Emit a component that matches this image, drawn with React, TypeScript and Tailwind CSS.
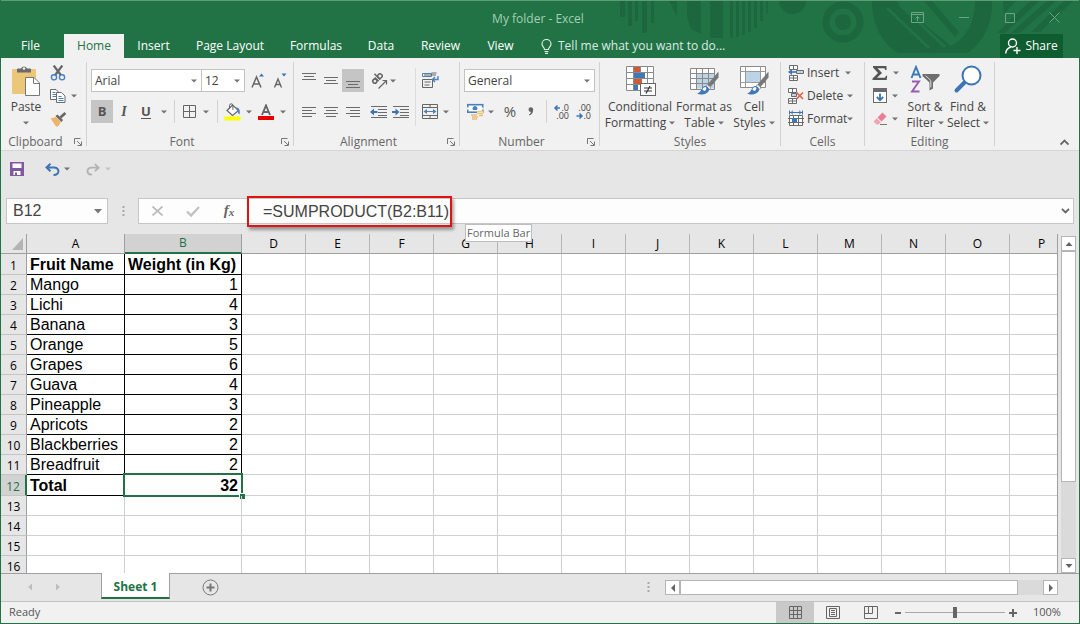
import React from "react";

type Kids = { children?: React.ReactNode };

/* ---------- small building blocks ---------- */

function Caret({ className = "text-[#737373]" }: { className?: string }) {
  return (
    <svg width="6" height="4" viewBox="0 0 6 4" className={className} aria-hidden="true">
      <path d="M0 0.5h6L3 3.5z" fill="currentColor" />
    </svg>
  );
}

function Tool({ label, className = "w-[22px]", children }: Kids & { label: string; className?: string }) {
  return (
    <button type="button" aria-label={label} className={`flex h-full shrink-0 items-center justify-center ${className}`}>
      {children}
    </button>
  );
}

function Sep() {
  return <div className="mt-px mb-1 w-px shrink-0 bg-[#d2d2d2]" />;
}

function Group({ title, launcher, className, children }: Kids & { title: string; launcher?: boolean; className: string }) {
  return (
    <section aria-label={title} className={`flex shrink-0 flex-col ${className}`}>
      <div className="flex h-[73px]">{children}</div>
      <div className="flex h-4 items-center">
        <h2 className="flex-1 text-center text-[12px] leading-4 text-[#666]">{title}</h2>
        {launcher && (
          <button type="button" aria-label={`${title} settings`} className="flex w-4 items-center justify-end pr-[3px]">
            <svg width="9" height="9" viewBox="0 0 9 9" fill="none" stroke="#777" aria-hidden="true">
              <path d="M0.5 6V0.5H6.5M3 3l4 4M7.5 3.5v4h-4" />
            </svg>
          </button>
        )}
      </div>
    </section>
  );
}

function Picker({ label, value, className }: { label: string; value: string; className: string }) {
  return (
    <label className={`relative h-full shrink-0 border border-[#c3c3c3] bg-white ${className}`}>
      <select
        aria-label={label}
        className="block h-[21px] w-full appearance-none bg-transparent pr-3 pl-[3px] text-[12px] leading-[18px] text-[#444] outline-none"
        defaultValue={value}
      >
        <option>{value}</option>
      </select>
      <span className="pointer-events-none absolute inset-y-0 right-1 flex items-center">
        <Caret />
      </span>
    </label>
  );
}

function BigButton({ icon, lines, className }: { icon: React.ReactNode; lines: [string, string]; className: string }) {
  return (
    <button type="button" className={`flex shrink-0 flex-col items-center pt-1 text-[12px] leading-4 whitespace-nowrap text-[#444] ${className}`}>
      <span className="flex h-[34px] items-start justify-center">{icon}</span>
      <span>{lines[0]}</span>
      <span className="flex items-center gap-[3px]">
        {lines[1]}
        <Caret />
      </span>
    </button>
  );
}

function CellsButton({ icon, text, gap }: { icon: React.ReactNode; text: string; gap: string }) {
  return (
    <button type="button" className={`flex h-[23px] items-center text-[12px] text-[#444] ${gap}`}>
      <span className="flex items-center gap-[3px]">
        {icon}
        {text}
      </span>
      <Caret />
    </button>
  );
}

/* ---------- icons ---------- */

function Lines({ rows }: { rows: [number, number, number][] }) {
  return (
    <svg width="16" height="16" viewBox="0 0 16 16" fill="#6b6b6b" aria-hidden="true">
      {rows.map(([x, y, w]) => (
        <rect key={y} x={x} y={y} width={w} height="1" />
      ))}
    </svg>
  );
}

const PasteIcon = (
  <svg width="30" height="32" viewBox="0 0 30 32" aria-hidden="true">
    <rect x="1" y="4" width="24" height="25" rx="1" fill="#ecc77a" />
    <path d="M6 7.500V4.500a1 1 0 0 1 1-1h3a3.200 3.200 0 0 1 6 0h3a1 1 0 0 1 1 1v3z" fill="#6b6b6b" />
    <circle cx="13" cy="3.500" r="1.300" fill="#f1f1f1" />
    <path d="M14.500 12.500h8.500l5.500 5.500v12.500h-14z" fill="#fff" stroke="#777" />
    <path d="M22.500 12.500v6h6" fill="none" stroke="#777" />
  </svg>
);

const CutIcon = (
  <svg width="16" height="16" viewBox="0 0 16 16" fill="none" aria-hidden="true">
    <path d="M3.700 0.500L10.800 10M12.300 0.500L5.200 10" stroke="#666" strokeWidth="2.200" />
    <circle cx="4" cy="12.300" r="2.600" fill="#f1f1f1" stroke="#4a80bd" strokeWidth="1.400" />
    <circle cx="12" cy="12.300" r="2.600" fill="#f1f1f1" stroke="#4a80bd" strokeWidth="1.400" />
  </svg>
);

const CopyIcon = (
  <svg width="16" height="16" viewBox="0 0 16 16" fill="#fff" stroke="#6b6b6b" aria-hidden="true">
    <path d="M0.500 1.500h5.500l3 3v7h-8.500z" />
    <path d="M2.500 4.500h3M2.500 6.500h4M2.500 8.500h4" stroke="#4a80bd" />
    <path d="M6.500 4.500h5l3.500 3.500v6.500H6.500z" />
    <path d="M8.500 8.500h3M8.500 10.500h5M8.500 12.500h5" stroke="#4a80bd" />
  </svg>
);

const PainterIcon = (
  <svg width="17" height="16" viewBox="0 0 17 16" aria-hidden="true">
    <path d="M0.500 7.500L6 6l5 5-3 4.500H6z" fill="#ecb56d" />
    <path d="M5.500 5l2-1.500L13 9l-1.500 2z" fill="#666" />
    <path d="M9.500 5.500l5-4.500 1.800 2-5 4.500z" fill="#666" />
  </svg>
);

function BordersIcon() {
  return (
    <svg width="13" height="13" viewBox="0 0 13 13" fill="none" stroke="#666" aria-hidden="true">
      <path d="M0.500 0.500h12v12h-12zM6.500 0.500v12M0.500 6.500h12" />
    </svg>
  );
}

const FillIcon = (
  <svg width="17" height="18" viewBox="0 0 17 18" aria-hidden="true">
    <path d="M3 7.500L8.500 2l6 5.500-6 5z" fill="#fff" stroke="#666" strokeWidth="1.200" />
    <path d="M5.500 6V2.500a1.700 1.700 0 0 1 3.400 0V7" fill="none" stroke="#666" />
    <path d="M12 4.500c3 0 4.500 2.500 3.500 7-1.500-1-2-2.500-2-4z" fill="#4a80bd" />
    <rect x="0.500" y="13.500" width="16" height="4" fill="#ffff00" />
  </svg>
);

const OrientIcon = (
  <svg width="18" height="18" viewBox="0 0 18 18" fill="none" stroke="#666" aria-hidden="true">
    <g transform="rotate(-45 7 7)" strokeWidth="1.500">
      <circle cx="4" cy="7" r="2.100" />
      <path d="M6.500 4.300V9.800M8.800 1.500v8.300" />
      <circle cx="11.200" cy="7" r="2.200" />
    </g>
    <path d="M8.500 16.500L16 9M12.500 8.500h4v4" strokeWidth="1.200" />
  </svg>
);

const WrapIcon = (
  <svg width="17" height="17" viewBox="0 0 17 17" fill="none" aria-hidden="true">
    <path d="M0.500 1.500h9v3h-9z" stroke="#4a80bd" />
    <path d="M2 3h12M9.500 1h5" stroke="#666" />
    <path d="M0.500 7.500h10v8h-10z" stroke="#666" />
    <path d="M2.500 10h6M2.500 13h5" stroke="#666" />
    <path d="M16 4v3.500H11M13 5l-2.500 2.500L13 10" stroke="#4a80bd" strokeWidth="1.400" />
  </svg>
);

const MergeIcon = (
  <svg width="16" height="15" viewBox="0 0 16 15" fill="none" stroke="#666" aria-hidden="true">
    <path d="M0.500 0.500h15v14h-15zM0.500 3.500h15M0.500 11.500h15M8 0.500v3M8 11.500v3" />
    <path d="M3 7.500h10" stroke="#4a80bd" />
    <path d="M1.500 7.500L5 5v5zM14.500 7.500L11 5v5z" fill="#4a80bd" stroke="none" />
  </svg>
);

function IndentIcon({ out }: { out?: boolean }) {
  return (
    <svg width="17" height="14" viewBox="0 0 17 14" aria-hidden="true">
      <path d="M1 1.500h16M8 4.500h9M8 7.500h9M8 10.500h9M1 12.500h16" stroke="#6b6b6b" fill="none" />
      {out ? (
        <path d="M0 7l4-3.500V6h3.500v2H4v2.500z" fill="#3c74b4" />
      ) : (
        <path d="M7.500 7L3.500 3.500V6H0v2h3.500v2.500z" fill="#3c74b4" />
      )}
    </svg>
  );
}

const MoneyIcon = (
  <svg width="17" height="17" viewBox="0 0 17 17" aria-hidden="true">
    <rect x="0.700" y="1.700" width="15" height="7.500" fill="#fff" stroke="#4a80bd" strokeWidth="1.600" />
    <path d="M6 7a2.500 2.500 0 1 1 4 0z" fill="#4a80bd" />
    <path d="M0 4.500h2v2H0zM14.500 4.500h2v2h-2z" fill="#fff" />
    <path d="M10 7.500h6v4h-6z" fill="#f4e3a6" />
    <path d="M10.500 8.500h5.500M10.500 10.500h5.500" stroke="#ecc77a" />
    <path d="M4 12h6M5 14h6M5 16h5M12 12.500h4" stroke="#ebba7c" strokeWidth="1.600" />
  </svg>
);

function DecimalIcon({ inc }: { inc?: boolean }) {
  return (
    <svg width="17" height="16" viewBox="0 0 17 16" aria-hidden="true">
      <g fill="#444" fontSize="9" fontFamily="Open Sans, sans-serif" textAnchor="end">
        <text x="16" y="7">{inc ? ".0" : ".00"}</text>
        <text x="16" y="15">{inc ? ".00" : ".0"}</text>
      </g>
      {inc ? (
        <path d="M7 4H2M4.500 1.500L2 4 4.500 6.500" fill="none" stroke="#3c74b4" strokeWidth="1.500" />
      ) : (
        <path d="M1.500 12h5.500M4.500 9.500L7 12 4.500 14.500" fill="none" stroke="#3c74b4" strokeWidth="1.500" />
      )}
    </svg>
  );
}

const ConditionalIcon = (
  <svg width="31" height="31" viewBox="0 0 31 31" aria-hidden="true">
    <path d="M1.500 1.500h27v24h-27z" fill="#fff" />
    <path d="M1.500 1.500h27v24h-27zM1.500 7.500h27M1.500 13.500h27M1.500 19.500h27M8.500 1.500v24M15.500 1.500v24M22.500 1.500v24" fill="none" stroke="#8a8a8a" />
    <path d="M9 2h6v5H9zM9 14h8v5H9z" fill="#cf5b35" />
    <path d="M9 8h11v5H9zM9 20h4v5H9z" fill="#3f78b6" />
    <rect x="15.500" y="18.500" width="15" height="12" fill="#fff" stroke="#666" />
    <path d="M19 23h8M19 26h8M25 21l-4 7.500" fill="none" stroke="#333" strokeWidth="1.200" />
  </svg>
);

function Brush() {
  return (
    <>
      <path d="M29.500 6.500v6L21.500 22l-3-2.500z" fill="#777" />
      <path d="M18 19.500l4 3.500-2 1.500-3-3z" fill="#fff" stroke="#777" strokeWidth="0.600" />
      <path d="M8 28.500c4.500-0.500 4-6 7.500-7.500 3 0 5 2 4.500 4.500C18.500 29 12 31 8 28.500z" fill="#3f78b6" />
      <path d="M13.500 25c0-2 1.500-3 3-3 1.500 0.500 1 2.500-0.500 4z" fill="#fff" />
    </>
  );
}

const TableIcon = (
  <svg width="30" height="31" viewBox="0 0 30 31" aria-hidden="true">
    <path d="M1.500 3.500h24v20h-24z" fill="#fff" />
    <path d="M7.500 8.500h18v15h-18z" fill="#bdd3e6" />
    <path d="M1.500 3.500h24v21h-24zM1.500 8.500h24M1.500 13.500h24M1.500 18.500h24M7.500 3.500v21M13.500 3.500v21M19.500 3.500v21" fill="none" stroke="#8a8a8a" />
    <Brush />
  </svg>
);

const CellStyleIcon = (
  <svg width="30" height="31" viewBox="0 0 30 31" aria-hidden="true">
    <path d="M1.500 1.500h25v21h-25z" fill="#fff" stroke="#8a8a8a" />
    <path d="M1.500 6.500h25M1.500 17.500h25M6.500 1.500v21M21.500 1.500v21" fill="none" stroke="#9a9a9a" />
    <path d="M7 7h14v10H7z" fill="#bdd3e6" />
    <Brush />
  </svg>
);

const InsertIcon = (
  <svg width="16" height="16" viewBox="0 0 16 16" fill="#fff" stroke="#6b6b6b" aria-hidden="true">
    <path d="M1.500 0.500h8v4h-8zM5.500 0.500v4M1.500 10.500h8v5h-8zM5.500 10.500v5M1.500 13h8" />
    <path d="M8.500 5.500h7v3h-7z" fill="#bdd3e6" />
    <path d="M8 7H3" stroke="#3c74b4" strokeWidth="1.600" />
    <path d="M0 7l4-3v6z" fill="#3c74b4" stroke="none" />
  </svg>
);

const DeleteIcon = (
  <svg width="16" height="16" viewBox="0 0 16 16" fill="#fff" stroke="#6b6b6b" aria-hidden="true">
    <path d="M0.500 0.500h8v4h-8zM4.500 0.500v4M0.500 10.500h8v5h-8zM4.500 10.500v5M0.500 13h8" />
    <path d="M3.500 5.500h5v3h-5z" fill="#bdd3e6" />
    <path d="M8.500 4.500l6.500 6.500M15 4.500L8.500 11" stroke="#e2604a" strokeWidth="1.700" />
  </svg>
);

const FormatIcon = (
  <svg width="16" height="17" viewBox="0 0 16 17" fill="none" stroke="#6b6b6b" aria-hidden="true">
    <path d="M1.500 5.500h13v10h-13z" fill="#fff" />
    <path d="M5.500 5.500v10M10.500 5.500v10M0 8.500h16M0 12.500h16" />
    <path d="M4 8h5v4H4z" fill="#3f78b6" stroke="none" />
    <path d="M2 2.500h12M1.500 0.500v4M14.500 0.500v4M5 0.700L3 2.500 5 4.300M11 0.700l2 1.800-2 1.800" stroke="#3c74b4" />
  </svg>
);

const SigmaIcon = (
  <svg width="16" height="16" viewBox="0 0 16 16" aria-hidden="true">
    <path d="M1 1h13.500v4h-1.300l-0.700-1.700H5.500L10 8l-5 4.700h8l1-2h1.200l-0.500 4.300H0.500v-1.500L6 8 1 2.500z" fill="#555" />
  </svg>
);

const FillDownIcon = (
  <svg width="15" height="16" viewBox="0 0 15 16" aria-hidden="true">
    <rect x="0.500" y="0.500" width="13" height="14" fill="#fff" stroke="#6b6b6b" />
    <path d="M0 0h14v4H0z" fill="#6b6b6b" />
    <path d="M7 5.500V12M3.800 9L7 12.200 10.200 9" fill="none" stroke="#3c74b4" strokeWidth="1.800" />
  </svg>
);

const EraserIcon = (
  <svg width="15" height="14" viewBox="0 0 15 14" aria-hidden="true">
    <path d="M4.500 5.500L9.500 0.500l4 4L8.500 9.500z" fill="#ec7f96" />
    <path d="M3.800 6.200L7.800 10.200 5.500 12.500H3.500L0.500 9.500z" fill="#f2a3b3" />
    <path d="M7 12.500h7" stroke="#777" />
  </svg>
);

const SortIcon = (
  <svg width="30" height="31" viewBox="0 0 30 31" fill="none" aria-hidden="true">
    <path d="M1.500 13L6 2l4.500 11M3 9.500h6" stroke="#3c78b8" strokeWidth="1.900" />
    <path d="M2 16.500h7L2 26.500h7.500" stroke="#9a5bb5" strokeWidth="1.900" />
    <path d="M12.500 9h17v2l-6.500 6.500v6l-3.500 2v-8l-7-6.500z" fill="#6d6d6d" />
    <path d="M15.500 10.500l5.300 5v7" stroke="#ddd" strokeWidth="1" />
  </svg>
);

const FindIcon = (
  <svg width="30" height="31" viewBox="0 0 30 31" fill="none" aria-hidden="true">
    <path d="M11.500 17.500L3.500 25.500" stroke="#3c74b4" strokeWidth="4" strokeLinecap="round" />
    <circle cx="18.500" cy="10.500" r="9" fill="#fff" stroke="#3c74b4" strokeWidth="2" />
  </svg>
);

/* ---------- header ---------- */

function HeaderArt() {
  return (
    <svg className="absolute top-0 right-0" width="479" height="58" viewBox="600 0 479 58" fill="#1c673e" aria-hidden="true">
      <path d="M620 1h5v16h-5zM628 1h4v25h-4zM635 1h3v20h-3zM642 1h5v32h-5zM651 1h3v22h-3z" />
      <path d="M669 1h8v15zM687 1h14v33l-10-5-4-12zM710 1h13v37h-13z" />
      <path d="M730 1h3v37h-3zM736 1h3v36h-3zM742 1h3v34h-3zM748 1h3v31h-3zM754 1h3v27h-3zM760 1h3v20h-3zM766 1h2v12h-2z" />
      <path d="M779 1h27a13.500 13 0 0 1-27 0z" />
      <circle cx="843" cy="22" r="17" fill="none" stroke="#1c673e" strokeWidth="7" />
      <circle cx="843" cy="22" r="8" />
      <path d="M872 1h24l55 45c12-6 24-20 24-45h17c1 24-10 42-24 52h-70C880 42 872 22 872 1z" />
      <path d="M887 8l42 40M899 4l46 43M912 1l35 35" fill="none" stroke="#217346" strokeWidth="3" />
      <path d="M923 1l32 36c8-8 14-18 14-36z" fill="#217346" />
      <path d="M924 1l8 0 27 31-4 5z" />
      <path d="M1003 1h13l-12 13zM1030 1h9l-34 32h-8zM1047 1h9l-36 32h-9zM1064 1h9l-33 31h-9z" />
    </svg>
  );
}

const tabs: [string, string][] = [
  ["Insert", "w-[59px]"],
  ["Page Layout", "w-[94px]"],
  ["Formulas", "w-[78px]"],
  ["Data", "w-[52px]"],
  ["Review", "w-[67px]"],
  ["View", "w-[53px]"],
];

function Header() {
  return (
    <header className="relative h-[58px] bg-[#217346] text-[12px] text-white">
      <HeaderArt />
      <div className="relative flex h-[34px] items-center border-t border-[#5f9a79]">
        <div className="w-[178px]" />
        <h1 className="flex-1 pt-0.5 text-center text-[12px] text-[#a3cfb4]">My folder - Excel</h1>
        <div className="flex w-[182px] items-center text-[#6ba585]">
          <button type="button" aria-label="Ribbon display options" className="flex w-10 justify-center">
            <svg width="13" height="11" viewBox="0 0 13 11" fill="none" stroke="currentColor" aria-hidden="true">
              <path d="M0.500 0.500h12v10h-12zM0.500 2.500h12M6.500 9V4.500M4.500 6.500l2-2 2 2" />
            </svg>
          </button>
          <button type="button" aria-label="Minimize" className="flex w-[54px] justify-center">
            <svg width="10" height="1" viewBox="0 0 10 1" aria-hidden="true"><rect width="10" height="1" fill="currentColor" /></svg>
          </button>
          <button type="button" aria-label="Maximize" className="flex w-[38px] justify-center">
            <svg width="10" height="10" viewBox="0 0 10 10" fill="none" stroke="currentColor" aria-hidden="true"><path d="M0.500 0.500h9v9h-9z" /></svg>
          </button>
          <button type="button" aria-label="Close" className="flex w-[50px] justify-center">
            <svg width="11" height="11" viewBox="0 0 11 11" fill="none" stroke="currentColor" aria-hidden="true"><path d="M0.500 0.500l10 10M10.500 0.500l-10 10" /></svg>
          </button>
        </div>
      </div>
      <nav className="relative flex h-6 items-stretch">
        <button type="button" className="w-[59px]">File</button>
        <button type="button" className="ml-1 w-[60px] bg-[#f1f1f1] text-[#217346]">Home</button>
        {tabs.map(([name, width]) => (
          <button type="button" key={name} className={width}>{name}</button>
        ))}
        <button type="button" className="ml-[14px] flex items-center gap-1.5 text-[#dcebe2]">
          <svg width="11" height="15" viewBox="0 0 11 15" fill="none" stroke="currentColor" strokeWidth="1.200" aria-hidden="true">
            <path d="M3.500 10.500c0-2-2.500-2.800-2.500-5.500a4.500 4.500 0 0 1 9 0c0 2.700-2.500 3.500-2.500 5.500zM3.500 12.500h4M4 14.400h3" />
          </svg>
          Tell me what you want to do...
        </button>
        <button type="button" className="mr-4 ml-auto flex w-[63px] items-center justify-center gap-1 bg-[#0e5c2f]">
          <svg width="16" height="16" viewBox="0 0 16 16" fill="none" stroke="#fff" strokeWidth="1.400" aria-hidden="true">
            <circle cx="7.500" cy="5" r="4" />
            <path d="M0.800 15.500c0-3.500 2-5.500 5-6.500M8.500 12.500h7M12 9v7" />
          </svg>
          Share
        </button>
      </nav>
    </header>
  );
}

/* ---------- ribbon ---------- */

function Ribbon() {
  return (
    <div className="flex h-[93px] border-b border-[#d5d5d5] bg-[#f1f1f1] pt-[3px]">
      <Group title="Clipboard" launcher className="w-[85px]">
        <button type="button" className="ml-1.5 flex w-[38px] flex-col items-center pt-1 text-[12px] leading-4 text-[#444]">
          <span className="flex h-[34px]">{PasteIcon}</span>
          Paste
          <span className="pt-1.5"><Caret className="block text-[#737373]" /></span>
        </button>
        <div className="ml-0.5 flex flex-col">
          <div className="flex h-[23px]"><Tool label="Cut">{CutIcon}</Tool></div>
          <div className="flex h-[23px]">
            <Tool label="Copy">{CopyIcon}</Tool>
            <Tool label="Copy options" className="w-[10px]"><Caret /></Tool>
          </div>
          <div className="flex h-[23px]"><Tool label="Format painter">{PainterIcon}</Tool></div>
        </div>
      </Group>
      <Sep />

      <Group title="Font" launcher className="w-[206px]">
        <div className="flex flex-col gap-2 pt-2 pl-1">
          <div className="flex h-[23px]">
            <Picker label="Font" value="Arial" className="w-[111px]" />
            <Picker label="Font size" value="12" className="ml-[-1px] w-[44px]" />
            <Tool label="Grow font" className="ml-px w-6">
              <svg width="16" height="16" viewBox="0 0 16 16" fill="none" aria-hidden="true">
                <path d="M2 14.500L6.500 4 11 14.500M3.500 11h6" stroke="#666" strokeWidth="1.500" />
                <path d="M9 3.500h5L11.500 0.500z" fill="#3c74b4" />
              </svg>
            </Tool>
            <Tool label="Shrink font" className="w-[22px]">
              <svg width="16" height="16" viewBox="0 0 16 16" fill="none" aria-hidden="true">
                <path d="M1.500 14.500L5 6l3.500 8.500M2.700 11.500h4.600" stroke="#666" strokeWidth="1.400" />
                <path d="M8.500 0.500h5L11 3.500z" fill="#3c74b4" />
              </svg>
            </Tool>
          </div>
          <div className="flex h-[23px]">
            <Tool label="Bold" className="w-[22px] bg-[#c5c5c5]"><b className="text-[13px] text-[#555]">B</b></Tool>
            <Tool label="Italic"><i className="font-[Liberation_Serif,serif] text-[14px] font-bold text-[#555]">I</i></Tool>
            <Tool label="Underline"><span className="border-b border-[#555] text-[13px] leading-[14px] font-bold text-[#555]">U</span></Tool>
            <Tool label="Underline options" className="w-[13px]"><Caret /></Tool>
            <div className="ml-1 w-px bg-[#d2d2d2]" />
            <Tool label="Borders" className="ml-[3px] w-[22px]"><BordersIcon /></Tool>
            <Tool label="Border options" className="w-3"><Caret /></Tool>
            <div className="ml-[5px] w-px bg-[#d2d2d2]" />
            <Tool label="Fill color" className="ml-[3px] w-[22px]">{FillIcon}</Tool>
            <Tool label="Fill options" className="w-[11px]"><Caret /></Tool>
            <Tool label="Font color" className="w-6">
              <svg width="16" height="16" viewBox="0 0 16 16" fill="none" aria-hidden="true">
                <path d="M4 11L8 1.500 12 11M5.300 8h5.400" stroke="#666" strokeWidth="1.900" />
                <rect y="12" width="16" height="4" fill="#e60000" />
              </svg>
            </Tool>
            <Tool label="Font color options" className="w-[10px]"><Caret /></Tool>
          </div>
        </div>
      </Group>
      <Sep />

      <Group title="Alignment" launcher className="w-[165px]">
        <div className="flex flex-col gap-2 pt-2 pl-1">
          <div className="flex h-[23px]">
            <Tool label="Top align"><Lines rows={[[1, 0, 14], [3, 3, 10], [1, 6, 14]]} /></Tool>
            <Tool label="Middle align"><Lines rows={[[1, 4, 14], [3, 7, 10], [1, 10, 14]]} /></Tool>
            <Tool label="Bottom align" className="w-[22px] bg-[#c5c5c5]"><Lines rows={[[1, 8, 14], [3, 11, 10], [1, 14, 14]]} /></Tool>
            <Tool label="Orientation" className="ml-1 w-[22px]">{OrientIcon}</Tool>
            <Tool label="Orientation options" className="w-1.5"><Caret /></Tool>
          </div>
          <div className="flex h-[23px]">
            <Tool label="Align left"><Lines rows={[[1, 3, 14], [1, 6, 10], [1, 9, 14], [1, 12, 10]]} /></Tool>
            <Tool label="Center"><Lines rows={[[1, 3, 14], [3, 6, 10], [1, 9, 14], [3, 12, 10]]} /></Tool>
            <Tool label="Align right"><Lines rows={[[1, 3, 14], [5, 6, 10], [1, 9, 14], [5, 12, 10]]} /></Tool>
            <Tool label="Decrease indent" className="ml-[3px] w-[22px]"><IndentIcon out /></Tool>
            <Tool label="Increase indent"><IndentIcon /></Tool>
          </div>
        </div>
        <div className="mt-[7px] mb-2 ml-1 w-px bg-[#dcdcdc]" />
        <div className="flex flex-col gap-2 pt-2 pl-[3px]">
          <div className="flex h-[23px]"><Tool label="Wrap text">{WrapIcon}</Tool></div>
          <div className="flex h-[23px]">
            <Tool label="Merge and center">{MergeIcon}</Tool>
            <Tool label="Merge options" className="w-[10px]"><Caret /></Tool>
          </div>
        </div>
      </Group>
      <Sep />

      <Group title="Number" launcher className="w-[139px]">
        <div className="flex flex-col gap-2 pt-2 pl-1">
          <div className="flex h-[23px]"><Picker label="Number format" value="General" className="w-[131px]" /></div>
          <div className="flex h-[23px]">
            <Tool label="Currency">{MoneyIcon}</Tool>
            <Tool label="Currency options" className="w-[10px]"><Caret /></Tool>
            <Tool label="Percent" className="w-7"><span className="text-[15px] text-[#555]">%</span></Tool>
            <Tool label="Comma style" className="w-3.5">
              <svg width="6" height="9" viewBox="0 0 6 9" aria-hidden="true"><path d="M0.500 2.500a2.300 2.300 0 0 1 4.700 0C5.200 5.500 4 7.500 1.500 8.500L1 7.500c1.200-0.700 1.700-1.500 1.800-2.600A2.300 2.300 0 0 1 0.500 2.500z" fill="#666" /></svg>
            </Tool>
            <div className="ml-2 w-px bg-[#d2d2d2]" />
            <Tool label="Increase decimal" className="ml-[3px] w-[22px]"><DecimalIcon inc /></Tool>
            <Tool label="Decrease decimal"><DecimalIcon /></Tool>
          </div>
        </div>
      </Group>
      <Sep />

      <Group title="Styles" className="w-[180px]">
        <BigButton icon={ConditionalIcon} lines={["Conditional", "Formatting"]} className="ml-[5px] w-[70px]" />
        <BigButton icon={TableIcon} lines={["Format as", "Table"]} className="w-[58px]" />
        <BigButton icon={CellStyleIcon} lines={["Cell", "Styles"]} className="w-[42px]" />
      </Group>
      <Sep />

      <Group title="Cells" className="w-[83px]">
        <div className="flex flex-col items-start pl-[7px]">
          <CellsButton icon={InsertIcon} text="Insert" gap="gap-1.5" />
          <CellsButton icon={DeleteIcon} text="Delete" gap="gap-1" />
          <CellsButton icon={FormatIcon} text="Format" gap="gap-0" />
        </div>
      </Group>
      <Sep />

      <Group title="Editing" className="w-[129px]">
        <div className="flex flex-col pl-1">
          <div className="flex h-[23px]"><Tool label="AutoSum">{SigmaIcon}</Tool><Tool label="AutoSum options" className="w-[10px]"><Caret /></Tool></div>
          <div className="flex h-[23px]"><Tool label="Fill">{FillDownIcon}</Tool><Tool label="Fill choices" className="w-[8px]"><Caret /></Tool></div>
          <div className="flex h-[23px]"><Tool label="Clear">{EraserIcon}</Tool><Tool label="Clear options" className="w-[8px]"><Caret /></Tool></div>
        </div>
        <BigButton icon={SortIcon} lines={["Sort &", "Filter"]} className="ml-0.5 w-[44px]" />
        <BigButton icon={FindIcon} lines={["Find &", "Select"]} className="w-[42px]" />
      </Group>
      <Sep />
      <button type="button" aria-label="Collapse ribbon" className="mt-auto mr-2.5 mb-1 ml-auto">
        <svg width="9" height="7" viewBox="0 0 9 7" fill="none" stroke="#666" strokeWidth="1.800" aria-hidden="true"><path d="M0.500 5.500l4-4 4 4" /></svg>
      </button>
    </div>
  );
}

/* ---------- quick access and formula bar ---------- */

function QuickAccess() {
  return (
    <div className="flex h-9 items-center pl-[9px]">
      <button type="button" aria-label="Save">
        <svg width="14" height="14" viewBox="0 0 14 14" aria-hidden="true">
          <path d="M0 0h14v14H0z" fill="#8159a3" />
          <path d="M2.500 1.500h9V6h-9zM3.500 9h7v4h-7z" fill="#fff" />
          <path d="M5 10.500h2V13H5z" fill="#8159a3" />
        </svg>
      </button>
      <button type="button" aria-label="Undo" className="ml-[21px]">
        <svg width="15" height="13" viewBox="0 0 15 13" fill="none" stroke="#3f73b5" strokeWidth="2" aria-hidden="true">
          <path d="M5.500 0.800L1.500 4.500l4 3.700M1.500 4.500h7.500c6 0 6 7.500-0.500 7.500" />
        </svg>
      </button>
      <button type="button" aria-label="Undo list" className="ml-1"><Caret /></button>
      <button type="button" aria-label="Redo" className="ml-4">
        <svg width="14" height="13" viewBox="0 0 15 13" fill="none" stroke="#b3b3b3" strokeWidth="2" aria-hidden="true">
          <path d="M9.500 0.800l4 3.700-4 3.700M13.500 4.500H6c-6 0-6 7.500 0.500 7.500" />
        </svg>
      </button>
      <button type="button" aria-label="Redo list" className="ml-[5px]"><Caret className="text-[#c4c4c4]" /></button>
    </div>
  );
}

function FormulaBar() {
  return (
    <div className="relative flex h-[47px] pt-[11px] pr-[5px] pl-[5px] font-[Liberation_Sans,sans-serif] text-[16px] text-[#444]">
      <div className="flex h-[26px] w-[102px] items-center border border-[#c6c6c6] bg-[#fdfdfd] pr-[5px] pl-1.5">
        <input aria-label="Name box" defaultValue="B12" className="min-w-0 flex-1 bg-transparent outline-none" />
        <svg width="8" height="5" viewBox="0 0 8 5" aria-hidden="true"><path d="M0 0h8L4 4.500z" fill="#777" /></svg>
      </div>
      <svg className="mt-2 ml-3.5" width="3" height="11" viewBox="0 0 3 11" fill="#a8a8a8" aria-hidden="true"><path d="M0.500 0h2v2h-2zM0.500 4h2v2h-2zM0.500 8h2v2h-2z" /></svg>
      <div className="ml-[13px] flex h-[26px] flex-1 items-stretch border border-[#c6c6c6] bg-[#fdfdfd]">
        <button type="button" aria-label="Cancel" className="flex w-9 items-center justify-center">
          <svg width="11" height="10" viewBox="0 0 11 10" fill="none" stroke="#b8b8b8" strokeWidth="1.600" aria-hidden="true"><path d="M0.500 0.500l10 9M10.500 0.500l-10 9" /></svg>
        </button>
        <button type="button" aria-label="Enter" className="flex w-9 items-center justify-center">
          <svg width="14" height="11" viewBox="0 0 14 11" fill="none" stroke="#c2c2c2" strokeWidth="2.400" aria-hidden="true"><path d="M1 5.500l4 4L13 1" /></svg>
        </button>
        <button type="button" aria-label="Insert function" className="flex w-9 items-center justify-center pb-0.5 font-[Liberation_Serif,serif] leading-none font-bold text-[#666] italic">
          <span className="text-[15px]">f</span>
          <span className="pt-1 text-[11px]">x</span>
        </button>
        <div className="mt-[-3px] mb-[-4px] flex w-[205px] border-2 border-[#e01212] pt-px pl-[14px] shadow-[2px_3px_3px_rgba(0,0,0,0.35)]">
          <input aria-label="Formula" defaultValue="=SUMPRODUCT(B2:B11)" className="w-full bg-transparent outline-none" />
        </div>
        <button type="button" aria-label="Expand formula bar" className="mr-[3px] ml-auto">
          <svg width="9" height="6" viewBox="0 0 9 6" fill="none" stroke="#666" strokeWidth="1.900" aria-hidden="true"><path d="M1 0.800l3.500 3.500L8 0.800" /></svg>
        </button>
      </div>
      <div role="tooltip" className="absolute top-[37px] left-[464px] z-10 border border-[#bdbdbd] bg-white px-px font-['Open_Sans',sans-serif] text-[11px] leading-4 text-[#666]">
        Formula Bar
      </div>
    </div>
  );
}

/* ---------- sheet ---------- */

const fruit: [string, string][] = [
  ["Fruit Name", "Weight (in Kg)"],
  ["Mango", "1"],
  ["Lichi", "4"],
  ["Banana", "3"],
  ["Orange", "5"],
  ["Grapes", "6"],
  ["Guava", "4"],
  ["Pineapple", "3"],
  ["Apricots", "2"],
  ["Blackberries", "2"],
  ["Breadfruit", "2"],
  ["Total", "32"],
];
const restColumns = ["D", "E", "F", "G", "H", "I", "J", "K", "L", "M", "N", "O", "P"];
const rowNumbers = Array.from({ length: 16 }, (_, i) => i + 1);

function Grid() {
  return (
    <table className="w-[1073px] table-fixed border-separate border-spacing-0 text-[16px] leading-[19px] text-black">
      <colgroup>
        <col className="w-[26px]" />
        <col className="w-[98px]" />
        <col className="w-[117px]" />
        {restColumns.map((c) => <col key={c} className="w-16" />)}
      </colgroup>
      <thead className="bg-[#e6e6e6] font-['Open_Sans',sans-serif] text-[12px] leading-[18px]">
        <tr className="h-5">
          <td className="border-r border-b border-[#9f9f9f] p-0">
            <svg className="ml-[11px]" width="11" height="12" viewBox="0 0 11 12" aria-hidden="true"><path d="M11 0v12H0z" fill="#b4b4b4" /></svg>
          </td>
          <th scope="col" className="border-r border-b border-[#9f9f9f] p-0 font-normal">A</th>
          <th scope="col" className="border-r border-b-2 border-r-[#9f9f9f] border-b-[#217346] bg-[#d2d2d2] p-0 font-normal text-[#217346]">B</th>
          {restColumns.map((c) => (
            <th key={c} scope="col" className="border-r border-b border-r-[#b5b5b5] border-b-[#9f9f9f] p-0 font-normal">{c}</th>
          ))}
        </tr>
      </thead>
      <tbody className="font-[Liberation_Sans,sans-serif]">
        {rowNumbers.map((n) => {
          const data = fruit[n - 1];
          const strong = n === 1 || n === 12;
          const line = data ? "border-black" : "border-[#d0d0d0]";
          return (
            <tr key={n} className={strong ? "h-[21px]" : "h-5"}>
              <th
                scope="row"
                className={`border-b p-0 text-center align-bottom font-['Open_Sans',sans-serif] text-[12px] leading-[17px] font-normal ${
                  n === 12 ? "border-r-2 border-r-[#217346] border-b-[#c4c4c4] bg-[#d2d2d2] text-[#217346]" : "border-r border-r-[#9f9f9f] border-b-[#c4c4c4] bg-[#e6e6e6]"
                }`}
              >
                {n}
              </th>
              <td className={`border-r border-b p-0 pl-[3px] whitespace-nowrap ${line} ${strong ? "font-bold" : ""}`}>{data?.[0]}</td>
              <td className={`relative border-r border-b p-0 whitespace-nowrap ${line} ${n === 1 ? "pl-[3px] text-left" : "pr-[3px] text-right"} ${strong ? "font-bold" : ""}`}>
                {data?.[1]}
                {n === 12 && (
                  <>
                    <span className="absolute -top-0.5 -right-0.5 -bottom-0.5 -left-0.5 border-2 border-[#217346]" />
                    <span className="absolute -right-1 -bottom-1 h-1.5 w-1.5 border-t border-l border-white bg-[#217346]" />
                  </>
                )}
              </td>
              {restColumns.map((c) => <td key={c} className="border-r border-b border-[#d0d0d0] p-0" />)}
            </tr>
          );
        })}
      </tbody>
    </table>
  );
}

function Tri({ d, className = "fill-[#666]" }: { d: string; className?: string }) {
  return (
    <svg width="8" height="8" viewBox="0 0 8 8" className={`shrink-0 ${className}`} aria-hidden="true"><path d={d} /></svg>
  );
}

function Sheet() {
  return (
    <div className="flex h-[339px] overflow-hidden">
      <main className="mr-[3px] min-w-0 flex-1 overflow-hidden border-r border-[#9f9f9f] bg-[linear-gradient(#e6e6e6_20px,#fff_20px)]">
        <Grid />
      </main>
      <div className="mt-0.5 mr-[3px] flex w-[15px] flex-col bg-[#dadada]">
        <button type="button" aria-label="Scroll up" className="flex h-[15px] items-center justify-center border border-[#b5b5b5] bg-white"><Tri d="M0.500 6h7L4 2z" /></button>
        <div className="h-[231px] border border-[#b5b5b5] bg-white" />
        <button type="button" aria-label="Scroll down" className="mt-auto flex h-[15px] items-center justify-center border border-[#b5b5b5] bg-white"><Tri d="M0.500 2h7L4 6z" /></button>
      </div>
    </div>
  );
}

function SheetTabs() {
  return (
    <div className="flex h-7 border-t border-[#9f9f9f]">
      <button type="button" aria-label="Previous sheet" className="mt-[9px] ml-[25px] h-2"><Tri d="M6 0.500v7L2 4z" className="block fill-[#bdbdbd]" /></button>
      <button type="button" aria-label="Next sheet" className="mt-[9px] ml-5 h-2"><Tri d="M2 0.500v7L6 4z" className="block fill-[#bdbdbd]" /></button>
      <button type="button" className="-mt-px ml-[39px] h-[26px] w-[69px] border-x border-b-2 border-x-[#9f9f9f] border-b-[#217346] bg-white pt-[3px] text-[12px] font-bold text-[#217346]">Sheet 1</button>
      <button type="button" aria-label="New sheet" className="mt-[5px] ml-8 h-4">
        <svg className="block" width="17" height="17" viewBox="0 0 17 17" fill="none" stroke="#777" aria-hidden="true">
          <circle cx="8.500" cy="8.500" r="7.500" />
          <path d="M8.500 4.500v8M4.500 8.500h8" strokeWidth="2" />
        </svg>
      </button>
      <svg className="mt-2 mr-[15px] ml-auto" width="3" height="11" viewBox="0 0 3 11" fill="#a8a8a8" aria-hidden="true"><path d="M0.500 0h2v2h-2zM0.500 4h2v2h-2zM0.500 8h2v2h-2z" /></svg>
      <div className="mt-1.5 mr-[21px] flex h-[15px] w-[393px] bg-[#dadada]">
        <button type="button" aria-label="Scroll left" className="flex w-[15px] items-center justify-center border border-[#b5b5b5] bg-white"><Tri d="M6 0v8L2 4z" /></button>
        <div className="w-[338px] border border-[#b5b5b5] bg-white" />
        <button type="button" aria-label="Scroll right" className="ml-auto flex w-[15px] items-center justify-center border border-[#b5b5b5] bg-white"><Tri d="M2 0v8L6 4z" /></button>
      </div>
    </div>
  );
}

function StatusBar() {
  return (
    <footer className="flex h-[22px] items-center border-t border-[#c2c2c2] bg-[#f1f1f1] text-[11px] text-[#555]">
      <span className="pl-2">Ready</span>
      <button type="button" aria-label="Normal view" className="ml-auto flex h-full w-[38px] items-center justify-center bg-[#c9c9c9]">
        <svg width="13" height="13" viewBox="0 0 13 13" fill="none" stroke="#666" aria-hidden="true"><path d="M0.500 0.500h12v12h-12zM4.500 0.500v12M8.500 0.500v12M0.500 4.500h12M0.500 8.500h12" /></svg>
      </button>
      <button type="button" aria-label="Page layout view" className="flex w-[38px] justify-center">
        <svg width="14" height="13" viewBox="0 0 14 13" fill="none" stroke="#666" aria-hidden="true"><path d="M0.500 0.500h13v12h-13zM3.500 2.500h7v8h-7zM5 4.500h4M5 6.500h4M5 8.500h4" /></svg>
      </button>
      <button type="button" aria-label="Page break view" className="flex w-[38px] justify-center">
        <svg width="14" height="13" viewBox="0 0 14 13" fill="none" stroke="#666" aria-hidden="true"><path d="M0.500 0.500h13v12h-13zM4.500 0.500v7M8.500 0.500v7M0.500 7.500h8" /></svg>
      </button>
      <button type="button" aria-label="Zoom out" className="ml-[5px] h-0.5 w-1.5 bg-[#666]" />
      <input
        type="range"
        aria-label="Zoom"
        min="0"
        max="200"
        defaultValue="100"
        className="ml-1 h-3 w-[100px] appearance-none bg-[linear-gradient(#a8a8a8,#a8a8a8)] bg-[length:100%_1px] bg-center bg-no-repeat [&::-webkit-slider-thumb]:h-[11px] [&::-webkit-slider-thumb]:w-1 [&::-webkit-slider-thumb]:appearance-none [&::-webkit-slider-thumb]:bg-[#666]"
      />
      <button type="button" aria-label="Zoom in" className="ml-1">
        <svg width="8" height="8" viewBox="0 0 8 8" fill="none" stroke="#666" strokeWidth="2" aria-hidden="true"><path d="M4 0v8M0 4h8" /></svg>
      </button>
      <span className="w-[62px] pl-4">100%</span>
    </footer>
  );
}

export default function App() {
  return (
    <div className="border-x border-b border-[#217346] bg-[#e6e6e6] font-['Open_Sans',sans-serif]">
      <Header />
      <Ribbon />
      <QuickAccess />
      <FormulaBar />
      <Sheet />
      <SheetTabs />
      <StatusBar />
    </div>
  );
}
